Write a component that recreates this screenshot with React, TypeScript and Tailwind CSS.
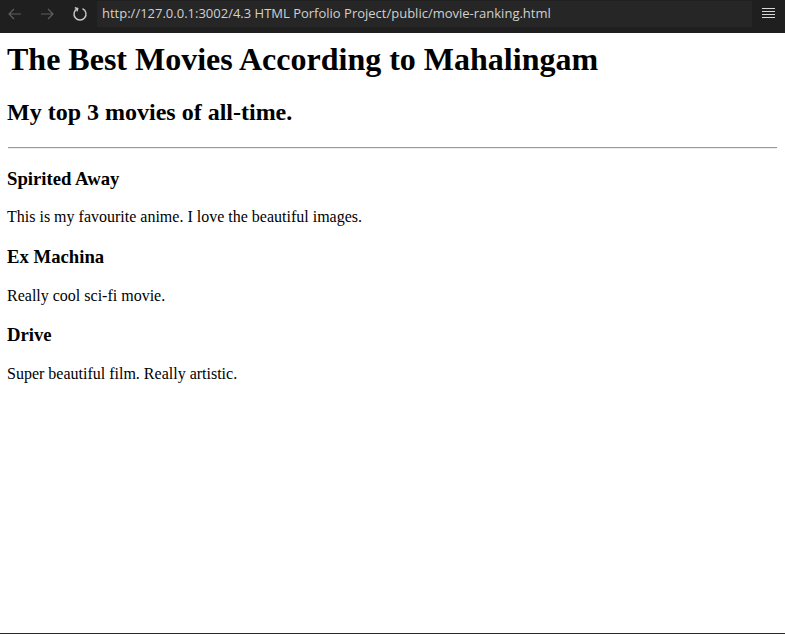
import React from "react";

const serif = { fontFamily: '"Liberation Serif", "Times New Roman", serif' };

export default function App() {
  const movies = [
    { t: "Spirited Away", d: "This is my favourite anime. I love the beautiful images." },
    { t: "Ex Machina", d: "Really cool sci-fi movie." },
    { t: "Drive", d: "Super beautiful film. Really artistic." },
  ];
  return (
    <div className="w-[785px] h-[634px] bg-white flex flex-col overflow-hidden">
      <div className="h-[33px] bg-[#1f1f1f] flex items-start shrink-0">
        <div className="flex items-center h-[28px] w-[97px] pl-[7px]">
          <svg width="16" height="16" viewBox="0 0 16 16" fill="none" stroke="#5f5f5f" strokeWidth="1.2">
            <path d="M14 8H2M7 3L2 8l5 5" />
          </svg>
          <svg className="ml-[16px]" width="16" height="16" viewBox="0 0 16 16" fill="none" stroke="#5f5f5f" strokeWidth="1.2">
            <path d="M2 8h12M9 3l5 5-5 5" />
          </svg>
          <svg className="ml-[17px]" width="16" height="16" viewBox="0 0 16 16" fill="none" stroke="#c8c8c8" strokeWidth="1.4">
            <path d="M5.5 2.6A6 6 0 1 0 10.5 2.6" />
            <path d="M2.8 1.8L5.7 2.5L5 5.4" />
          </svg>
        </div>
        <div
          className="mt-[1px] h-[26px] w-[655px] bg-[#262626] flex items-center pl-[5px] text-[13px] text-[#d0d0d0]"
          style={{ fontFamily: '"Open Sans", "Noto Sans", sans-serif' }}
        >
          http://127.0.0.1:3002/4.3 HTML Porfolio Project/public/movie-ranking.html
        </div>
        <div className="flex-1 flex justify-center pt-[8px]">
          <div className="flex flex-col gap-[2px] w-[13px]">
            <div className="h-[1px] bg-[#d8d8d8]" />
            <div className="h-[1px] bg-[#d8d8d8]" />
            <div className="h-[1px] bg-[#d8d8d8]" />
            <div className="h-[1px] bg-[#d8d8d8]" />
          </div>
        </div>
      </div>
      <div className="flex-1 pl-[7px] pr-[8px] pt-[8px] text-black" style={serif}>
        <h1 className="text-[32px] font-bold leading-[1.15]">The Best Movies According to Mahalingam</h1>
        <h2 className="mt-[21.44px] text-[24px] font-bold leading-[1.15]">My top 3 movies of all-time.</h2>
        <div className="ml-[1px] mt-[20px] h-[2px] border-t border-t-[#9a9a9a] border-b border-b-[#eeeeee]" />
        {movies.map((m, i) => (
          <div key={i}>
            <h3 className={`${i === 0 ? "mt-[19px]" : "mt-[19.1px]"} text-[18.72px] font-bold leading-[1.15]`}>{m.t}</h3>
            <p className="mt-[19.1px] text-[16px] leading-[1.15]">{m.d}</p>
          </div>
        ))}
      </div>
      <div className="h-[1px] bg-[#2a2a2a] shrink-0" />
    </div>
  );
}
